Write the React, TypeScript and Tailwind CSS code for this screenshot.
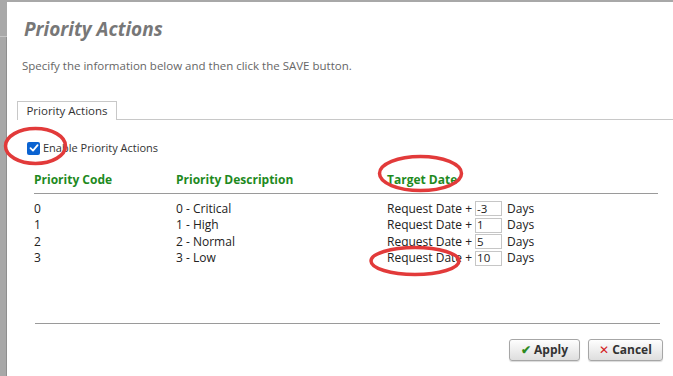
import React from "react";

const rows = [
  { code: "0", desc: "0 - Critical", days: "-3" },
  { code: "1", desc: "1 - High", days: "1" },
  { code: "2", desc: "2 - Normal", days: "5" },
  { code: "3", desc: "3 - Low", days: "10" },
];

function CheckBox() {
  return (
    <span className="flex h-[13px] w-[13px] items-center justify-center rounded-[2px] bg-[#0b63d1]">
      <svg width="10" height="10" viewBox="0 0 10 10">
        <path d="M1.5 5.2 L4 7.6 L8.6 2.2" fill="none" stroke="white" strokeWidth="1.8" strokeLinecap="round" strokeLinejoin="round" />
      </svg>
    </span>
  );
}

function Btn({ icon, label }: { icon: React.ReactNode; label: string }) {
  return (
    <button className="flex h-[22px] w-full items-center justify-center gap-[3px] rounded-[3px] border border-[#a6a6a6] bg-gradient-to-b from-[#fefefe] to-[#dedede] text-[12px] font-bold text-[#333] shadow-[0_1px_1px_rgba(0,0,0,0.15)]">
      {icon}
      {label}
    </button>
  );
}

export default function App() {
  return (
    <div
      className="relative flex h-[376px] w-[673px] overflow-hidden bg-white text-[#222]"
      style={{ fontFamily: '"Open Sans", "Noto Sans", sans-serif' }}
    >
      <div className="flex w-[7px] flex-col bg-[#a8a8a8]">
        <div className="h-[37px] border-b border-[#c4c4c4]" />
        <div className="flex-1 border-r border-[#8f8f8f]" />
      </div>
      <div className="flex flex-1 flex-col border-t-2 border-[#a8a8a8]">
        <h1 className="mt-[13px] pl-[17px] text-[19px] leading-[28px] font-bold italic text-[#777]">
          Priority Actions
        </h1>
        <p className="mt-[15px] pl-[15px] text-[11.5px] leading-[16px] text-[#666]">
          Specify the information below and then click the SAVE button.
        </p>

        <div className="mt-[27px] flex pl-[10px]">
          <div className="flex h-[19px] w-[100px] items-center justify-center border border-b-0 border-[#c8c8c8] text-[11.5px] text-[#333]">
            Priority Actions
          </div>
          <div className="flex-1 border-b border-[#c8c8c8]" />
        </div>

        <label className="mt-[20px] flex items-center gap-[3px] pl-[20px] text-[11px] text-[#333]">
          <CheckBox />
          Enable Priority Actions
        </label>

        <div className="mt-[14px] ml-[27px] mr-[15px]">
          <div className="grid grid-cols-[142px_211px_1fr] items-center border-b border-[#9a9a9a] pb-[4px] text-[12px] leading-[18px] font-bold text-[#1e8a1e]">
            <span>Priority Code</span>
            <span>Priority Description</span>
            <span>Target Date</span>
          </div>
          <div className="mt-[6px] flex flex-col">
            {rows.map((r) => (
              <div key={r.code} className="grid h-[16.5px] grid-cols-[142px_211px_1fr] items-center text-[12px] text-[#222]">
                <span>{r.code}</span>
                <span>{r.desc}</span>
                <span className="flex items-center">
                  Request Date +
                  <span className="ml-[3px] flex h-[15px] w-[27px] items-center border border-[#c6c6c6] pl-[1px] text-[11.5px] leading-none">
                    {r.days}
                  </span>
                  <span className="ml-[5px]">Days</span>
                </span>
              </div>
            ))}
          </div>
        </div>

        <div className="mt-auto mb-[52px] ml-[28px] mr-[13px] border-t border-[#9a9a9a]" />
      </div>

      <div className="absolute top-[339px] left-[509px] flex gap-[8px]">
        <div className="w-[71px]">
          <Btn icon={<span className="text-[12px] text-[#2b8a1f]">✔</span>} label="Apply" />
        </div>
        <div className="w-[75px]">
          <Btn icon={<span className="text-[12px] font-normal text-[#d42020]">✕</span>} label="Cancel" />
        </div>
      </div>

      <svg className="pointer-events-none absolute inset-0" width="673" height="376">
        <g fill="none" stroke="#e23a3a" strokeWidth="3.5">
          <ellipse cx="35.5" cy="146" rx="30" ry="17.5" />
          <ellipse cx="420.5" cy="173.5" rx="41" ry="17" />
          <ellipse cx="415" cy="261" rx="44" ry="13.5" />
        </g>
      </svg>
    </div>
  );
}
